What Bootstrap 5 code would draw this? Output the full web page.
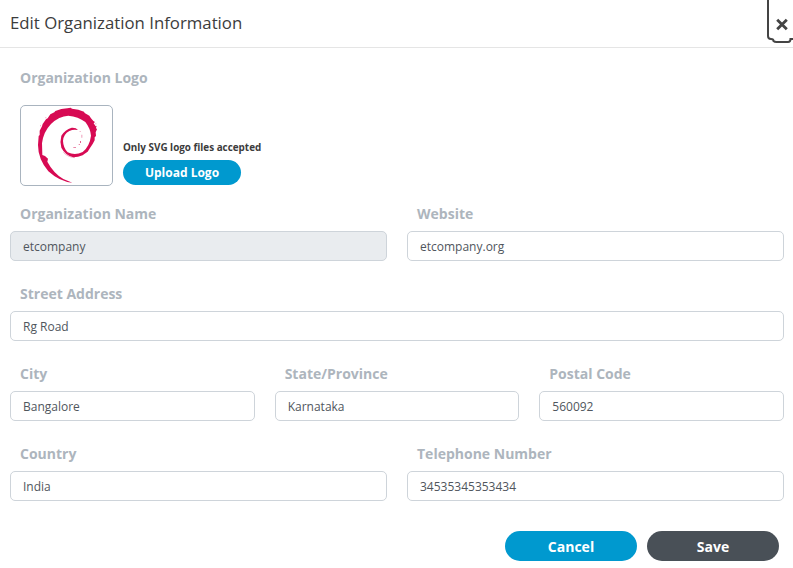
<!DOCTYPE html>
<html lang="en">
<head>
<meta charset="utf-8">
<meta name="viewport" content="width=device-width, initial-scale=1">
<title>Edit Organization Information</title>
<link href="https://cdn.jsdelivr.net/npm/bootstrap@5.3.0/dist/css/bootstrap.min.css" rel="stylesheet">
<style>
body{font-family:"Open Sans",sans-serif;color:#333;background:#fff}
.dialog-panel{width:794px;height:568px}
.dialog-head{height:48px;border-bottom:1px solid #e5e5e5;padding:0 10px 1px}
.dialog-title{font-size:16.8px;font-weight:400;color:#3c3c3c}
.close-tab{position:absolute;right:0;top:0;width:27px;height:44px}
.org-form{--bs-gutter-x:20px;padding-top:20px}
.field-label{font-size:14px;font-weight:700;line-height:20px;color:#adb5bd;margin:0 0 7px 10px;display:block}
.field{height:80px}
.form-control.org-input{height:30px;font-size:12px;font-weight:400;color:#50565d;border:1px solid #ced4da;border-radius:5px;padding:0 12px;line-height:28px}
.form-control.org-input:disabled{background:#e9ecef}
.logo-area{height:136px;padding:20px 0 0 20px}
.logo-row{gap:10px;margin-top:17px}
.logo-box{width:93px;height:81px;border:1px solid #a9b4bf;border-radius:5px}
.logo-note{font-size:9.9px;font-weight:700;line-height:14px;color:#3c3c3c;margin-bottom:6px}
.pill{border:0;border-radius:15px;color:#fff;font-weight:700;padding:0}
.pill:hover{color:#fff}
.pill-blue,.pill-blue:hover{background:#0099cf}
.pill-dark,.pill-dark:hover{background:#495057}
.pill-sm{width:118px;height:25px;font-size:12px;line-height:24px;margin-bottom:1px}
.pill-lg{width:132px;height:30px;font-size:14px;line-height:31px}
.dialog-actions{gap:10px;padding:7px 15px 0 0}
</style>
</head>
<body class="overflow-hidden">
<div class="dialog-panel position-relative">
  <header class="dialog-head d-flex align-items-center">
    <h1 class="dialog-title m-0">Edit Organization Information</h1>
    <button class="close-tab btn p-0 border-0 d-block" type="button" aria-label="Close">
      <svg class="d-block" width="27" height="44" viewBox="0 0 27 44" fill="none" stroke="#444"><path d="M1 0V36Q1 39 4 39Q6.500 39 6.500 41Q7.500 42 9.500 42H21Q23.500 42 23.500 39H27" stroke-width="2"/><path d="M10.200 19.700L19.800 29.300M19.800 19.700L10.200 29.300" stroke-width="2.800"/></svg>
    </button>
  </header>
  <form>
    <div class="logo-area">
      <span class="field-label m-0">Organization Logo</span>
      <div class="d-flex align-items-end logo-row">
        <div class="logo-box flex-shrink-0">
          <svg class="d-block" width="91" height="79" viewBox="33 33 273 237" fill="#d70a53"><path d="M187 263Q150 261 115 229Q84 192 84 150L86 123L89 120L89 107L96 94L98 87L108 73L113 70L121 58L133 52L136 48L154 42L172 40L182 38L186 41L205 44L222 50L224 54L238 62L243 70L250 78L255 81L251 85L257 94L260 92L258 99L261 103L257 112L258 123L254 127L254 136L248 147L240 159L233 170L224 176L218 181L204 185L190 187Q165 180 154 158Q149 140 154 122Q165 104 185 98Q198 97 204 105Q190 102 178 108Q160 118 159 138Q160 159 173 172Q195 183 218 171Q239 154 243 122Q241 100 226 81Q205 65 175 62Q147 63 123 87Q100 111 96 145L97 180L105 183L114 191L112 200Q130 234 160 252Z"/><path d="M160 172Q174 187 195 188" fill="none" stroke="#d70a53" stroke-width="1.500" opacity=".6"/><path d="M190 156h8v2h-8zM206 148h4v2h-4zM210 138h3v6h-3z" opacity=".65"/><path d="M214 119h3v9h-3zM209 108h3v3h-3zM90 91h3v3h-3zM106 67h3v3h-3zM256 85h3v3h-3z" opacity=".4"/></svg>
        </div>
        <div>
          <div class="logo-note">Only SVG logo files accepted</div>
          <button class="btn pill pill-blue pill-sm d-block" type="button">Upload Logo</button>
        </div>
      </div>
    </div>
    <div class="row org-form mx-0">
      <div class="col-6 field"><label class="field-label" for="o1">Organization Name</label><input class="form-control org-input" id="o1" value="etcompany" disabled></div>
      <div class="col-6 field"><label class="field-label" for="o2">Website</label><input class="form-control org-input" id="o2" value="etcompany.org"></div>
      <div class="col-12 field"><label class="field-label" for="o3">Street Address</label><input class="form-control org-input" id="o3" value="Rg Road"></div>
      <div class="col-4 field"><label class="field-label" for="o4">City</label><input class="form-control org-input" id="o4" value="Bangalore"></div>
      <div class="col-4 field"><label class="field-label" for="o5">State/Province</label><input class="form-control org-input" id="o5" value="Karnataka"></div>
      <div class="col-4 field"><label class="field-label" for="o6">Postal Code</label><input class="form-control org-input" id="o6" value="560092"></div>
      <div class="col-6 field"><label class="field-label" for="o7">Country</label><input class="form-control org-input" id="o7" value="India"></div>
      <div class="col-6 field"><label class="field-label" for="o8">Telephone Number</label><input class="form-control org-input" id="o8" value="34535345353434"></div>
    </div>
    <div class="d-flex justify-content-end dialog-actions">
      <button class="btn pill pill-blue pill-lg" type="button">Cancel</button>
      <button class="btn pill pill-dark pill-lg" type="button">Save</button>
    </div>
  </form>
</div>
<script src="https://cdn.jsdelivr.net/npm/bootstrap@5.3.0/dist/js/bootstrap.bundle.min.js"></script>
</body>
</html>
